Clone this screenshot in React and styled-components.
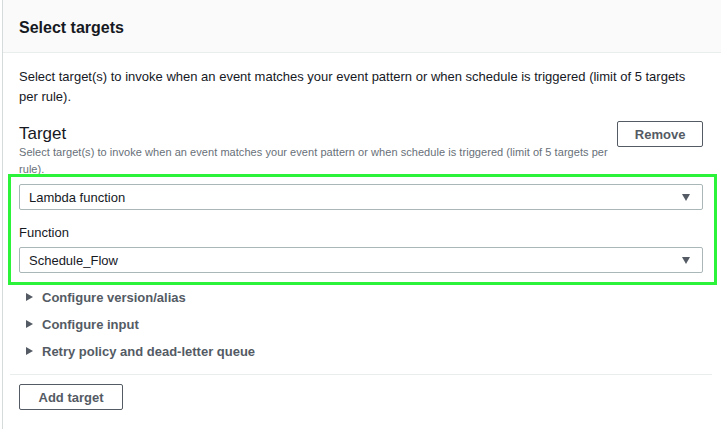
import styled, { createGlobalStyle } from "styled-components";

const GlobalStyle = createGlobalStyle`
  html, body {
    margin: 0;
    padding: 0;
    background: #ffffff;
  }
  body {
    font-family: "Liberation Sans", Arial, sans-serif;
    color: #16191f;
  }
`;

const Page = styled.div`
  width: 721px;
  height: 429px;
  overflow: hidden;
  box-sizing: border-box;
  padding-left: 2px;
`;

const Card = styled.div`
  height: 100%;
  border-left: 1px solid #d5dbdb;
  background: #fff;
`;

const Header = styled.div`
  height: 53px;
  box-sizing: border-box;
  display: flex;
  align-items: center;
  padding: 3px 16px 0;
  background: #fafafa;
  border-bottom: 1px solid #eaeded;
`;

const Title = styled.h2`
  margin: 0;
  font-size: 16px;
  font-weight: 700;
  color: #16191f;
`;

const Body = styled.div`
  padding: 14px 9px 0 7px;
`;

const Inner = styled.div`
  padding: 0 9px;
`;

const Description = styled.p`
  margin: 0;
  font-size: 13px;
  line-height: 20px;
`;

const TargetRow = styled.div`
  display: flex;
  justify-content: space-between;
  align-items: flex-start;
  margin-top: 14px;
`;

const TargetTitle = styled.h3`
  margin: 3px 0 0;
  font-size: 17px;
  line-height: 20px;
  font-weight: 400;
`;

const Hint = styled.p`
  margin: 0;
  max-width: 600px;
  font-size: 11px;
  line-height: 17px;
  color: #687078;
  letter-spacing: 0.05px;
`;

const Button = styled.button`
  font-family: "Liberation Sans", Arial, sans-serif;
  font-size: 13px;
  font-weight: 700;
  color: #545b64;
  background: #fff;
  border: 1px solid #545b64;
  border-radius: 2px;
  height: 26px;
  width: ${(p) => p.$width}px;
  padding: 0;
  cursor: pointer;
`;

const Highlight = styled.div`
  position: relative;
  margin-top: 6px;

  &::after {
    content: "";
    position: absolute;
    top: -10px;
    left: -11px;
    right: -14px;
    bottom: -12px;
    border: 3px solid #2af33a;
    pointer-events: none;
  }
`;

const Select = styled.div`
  height: 26px;
  box-sizing: border-box;
  border: 1px solid #aab7b8;
  border-radius: 2px;
  display: flex;
  align-items: center;
  justify-content: space-between;
  padding: 0 12px 0 9px;
  font-size: 13px;
  color: #16191f;
`;

const Caret = styled.span`
  width: 0;
  height: 0;
  border-left: 4.5px solid transparent;
  border-right: 4.5px solid transparent;
  border-top: 7px solid #545b64;
  margin-top: 1px;
`;

const Label = styled.div`
  font-size: 13px;
  line-height: 20px;
  margin: 13px 0 4px;
`;

const Expanders = styled.div`
  margin-top: 14px;
  display: flex;
  flex-direction: column;
  gap: 7px;
`;

const Expander = styled.div`
  display: flex;
  align-items: center;
  height: 20px;
  padding-left: 7px;
  font-size: 13px;
  font-weight: 700;
  color: #545b64;
`;

const Arrow = styled.span`
  width: 0;
  height: 0;
  border-top: 4px solid transparent;
  border-bottom: 4px solid transparent;
  border-left: 7px solid #545b64;
  margin-right: 9px;
`;

const Divider = styled.hr`
  margin: 13px 0 9px;
  border: none;
  border-top: 1px solid #eaeded;
`;

function SelectBox({ value }) {
  return (
    <Select>
      <span>{value}</span>
      <Caret />
    </Select>
  );
}

const expanders = [
  "Configure version/alias",
  "Configure input",
  "Retry policy and dead-letter queue",
];

function App() {
  return (
    <Page>
      <GlobalStyle />
      <Card>
        <Header>
          <Title>Select targets</Title>
        </Header>
        <Body>
          <Inner>
            <Description>
              Select target(s) to invoke when an event matches your event
              pattern or when schedule is triggered (limit of 5 targets per
              rule).
            </Description>
            <TargetRow>
              <div>
                <TargetTitle>Target</TargetTitle>
                <Hint>
                  Select target(s) to invoke when an event matches your event
                  pattern or when schedule is triggered (limit of 5 targets per
                  rule).
                </Hint>
              </div>
              <Button $width={86}>Remove</Button>
            </TargetRow>
            <Highlight>
              <SelectBox value="Lambda function" />
              <Label>Function</Label>
              <SelectBox value="Schedule_Flow" />
            </Highlight>
            <Expanders>
              {expanders.map((item) => (
                <Expander key={item}>
                  <Arrow />
                  {item}
                </Expander>
              ))}
            </Expanders>
          </Inner>
          <Divider />
          <Inner>
            <Button $width={104}>Add target</Button>
          </Inner>
        </Body>
      </Card>
    </Page>
  );
}

export default App;
